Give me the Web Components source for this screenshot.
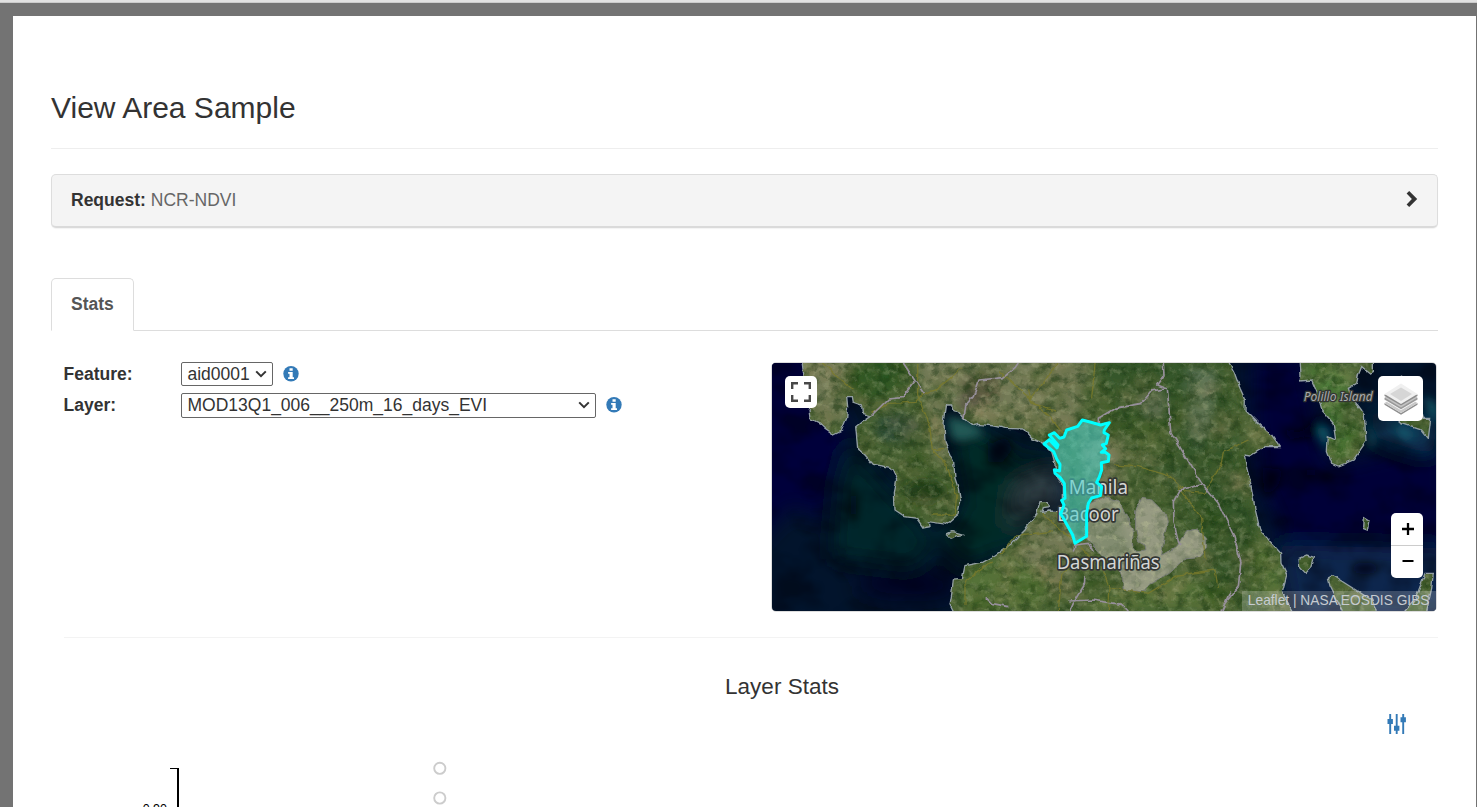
<!DOCTYPE html>
<html lang="en">
<head>
<meta charset="utf-8">
<title>View Area Sample</title>
<style>
html,body{margin:0;height:100%;overflow:hidden;background:#737373}
body{font-family:"Liberation Sans",Arial,sans-serif;font-size:17.5px;line-height:25px;color:#333}
</style>
</head>
<body>
<area-page>
  <page-title>View Area Sample</page-title>
  <request-panel label="Request:">NCR-NDVI</request-panel>
  <tab-bar>Stats</tab-bar>
  <stats-row>
    <field-row label="Feature:" w="92" top="0">aid0001</field-row>
    <field-row label="Layer:" w="415">MOD13Q1_006__250m_16_days_EVI</field-row>
    <area-map slot="map"></area-map>
  </stats-row>
  <layer-stats>Layer Stats</layer-stats>
</area-page>
<script>
function define(name, html, setup){
  customElements.define(name, class extends HTMLElement{
    constructor(){
      super();
      const t=document.createElement('template');
      t.innerHTML=html;
      this.attachShadow({mode:'open'}).append(t.content.cloneNode(true));
    }
    connectedCallback(){ if(setup) setup(this,this.shadowRoot); }
  });
}

define('area-page',`<style>
:host{display:flex;flex-direction:column;height:807px;box-sizing:border-box;background:#737373;padding:0 1px 0 0;overflow:hidden}
.top{height:2px;flex:none;background:#e1e1e1;border-bottom:1px solid #cbcbcb;margin-right:-1px}
main{flex:1;min-height:0;margin:13px 0 0 13px;background:#fff;padding:0 38px;overflow:hidden}
</style><div class="top"></div><main><slot></slot></main>`);

define('page-title',`<style>
:host{display:block;padding-top:74px;border-bottom:1px solid #eee}
h1{margin:0;font-size:30px;line-height:36px;font-weight:400;padding-bottom:22px}
</style><h1><slot></slot></h1>`);

define('request-panel',`<style>
:host{display:flex;align-items:center;justify-content:space-between;margin-top:25px;height:54px;box-sizing:border-box;padding:0 19px 1px;background:#f4f4f4;border:1px solid #ddd;border-bottom:2px solid #dadada;border-radius:5px;box-shadow:0 1px 1px rgba(0,0,0,.05)}
b{color:#333}span{color:#666}svg{display:block;margin-top:-2px}
</style><div><b></b> <span><slot></slot></span></div>
<svg width="12" height="18" viewBox="0 0 12 18"><path d="M.6 3.6 3.2 1l8 8-8 8-2.6-2.6L5.900 9z" fill="#333"/></svg>`,
(el,r)=>{r.querySelector('b').textContent=el.getAttribute('label')});

define('tab-bar',`<style>
:host{display:flex;margin-top:50px;height:53px;box-sizing:border-box;border-bottom:1px solid #ddd}
div{box-sizing:border-box;height:53px;width:83px;border:1px solid #ddd;border-bottom-color:#fff;border-radius:5px 5px 0 0;background:#fff;font-weight:700;color:#555;padding:13px 0 0 19px}
</style><div><slot></slot></div>`);

define('stats-row',`<style>
:host{display:flex;justify-content:space-between;margin:31px 0 0 13px;height:275px;border-bottom:1px solid #f3f3f3}
.map{padding-right:1px}
</style><div class="fields"><slot></slot></div><div class="map"><slot name="map"></slot></div>`);

define('field-row',`<style>
:host{display:flex;align-items:flex-start;height:31px}
b{width:117px;line-height:24px;flex:none;text-indent:-.5px}
.sel{box-sizing:border-box;height:25px;border:1px solid #666;border-radius:2px;display:flex;justify-content:space-between;align-items:center;padding:0 5px 1px 5.500px;white-space:nowrap;line-height:24px}
:host([top]) .sel{height:24px;padding-bottom:0}
.info{margin:4px 0 0 10px}
</style><b></b><div class="sel"><span><slot></slot></span><svg width="12" height="8" viewBox="0 0 12 8"><path d="M1.200 1.400 6 6.200l4.800-4.800" fill="none" stroke="#333" stroke-width="2"/></svg></div>
<svg class="info" width="17" height="17" viewBox="0 0 17 17"><circle cx="8" cy="7.800" r="7.700" fill="#337ab7"/><path d="M6.500 2.300h3.200v2.400H6.500zM5.100 6h4.600v5.200H11v1.900H5.100v-1.900h1.400V7.800H5.100z" fill="#fff"/></svg>`,
(el,r)=>{r.querySelector('b').textContent=el.getAttribute('label');
 r.querySelector('.sel').style.width=el.getAttribute('w')+'px';});

/* Map artwork: three drawing units per screen pixel */
define('area-map',`<style>
:host{display:block;position:relative;width:664px;height:248px;border:1px solid #ddd;border-radius:5px;overflow:hidden}
svg{display:block}
.btn{position:absolute;background:#fff;border-radius:5px;display:grid;place-items:center;color:#000}
.full{left:13px;top:13px;width:32px;height:32px}
.layers{left:606px;top:13px;width:45px;height:45px}
.zoom{left:619px;top:150px;width:32px;height:65px;grid-template-rows:32px 32px;row-gap:1px;background:linear-gradient(#fff 32px,#ccc 32px,#ccc 33px,#fff 33px)}
.zoom svg{margin-left:2px}
.attr{position:absolute;right:0;bottom:0;height:20px;line-height:19px;font-size:13.75px;padding:0 6.500px 0 6px;background:rgba(255,255,255,.2);color:#c6cbd0;white-space:nowrap}
</style>
<svg width="664" height="248" viewBox="21 24 1992 744">
<defs>
<filter id="landTex" x="0" y="0" width="100%" height="100%" color-interpolation-filters="sRGB">
<feTurbulence type="fractalNoise" baseFrequency=".010 .012" numOctaves="5" seed="8"/>
<feColorMatrix values=".9 0 0 0 -.06  .5 0 0 0 .17  .65 0 0 0 -.1  0 2 0 0 -.6"/></filter>
<filter id="grain" x="0" y="0" width="100%" height="100%" color-interpolation-filters="sRGB">
<feTurbulence type="fractalNoise" baseFrequency=".045 .05" numOctaves="3" seed="23"/>
<feColorMatrix values="0 0 0 0 .72  0 0 0 0 .74  0 0 0 0 .58  0 3 0 0 -1.500"/><feGaussianBlur stdDeviation="1.500"/></filter>
<filter id="darkGrain" x="0" y="0" width="100%" height="100%" color-interpolation-filters="sRGB">
<feTurbulence type="fractalNoise" baseFrequency=".03 .035" numOctaves="4" seed="4"/>
<feColorMatrix values="0 0 0 0 .08  0 0 0 0 .2  0 0 0 0 .06  0 3 0 0 -1.350"/><feGaussianBlur stdDeviation="2"/></filter>
<filter id="seaTex" x="0" y="0" width="100%" height="100%" color-interpolation-filters="sRGB">
<feTurbulence type="fractalNoise" baseFrequency=".008 .012" numOctaves="4" seed="15"/>
<feColorMatrix values="0 0 0 0 0  0 0 0 0 .01  0 0 0 0 .04  0 3 0 0 -1.250"/><feGaussianBlur stdDeviation="4"/></filter>
<filter id="rough" x="-5%" y="-5%" width="110%" height="110%"><feTurbulence type="fractalNoise" baseFrequency=".04" numOctaves="2" seed="3"/><feDisplacementMap in="SourceGraphic" scale="13" xChannelSelector="R" yChannelSelector="G"/></filter>
<filter id="b1" x="-40%" y="-40%" width="180%" height="180%"><feGaussianBlur stdDeviation="14"/></filter>
<filter id="b2" x="-60%" y="-60%" width="220%" height="220%"><feGaussianBlur stdDeviation="32"/></filter>
<path id="luzon" d="M110 10L118 70 128 105 142 125 132 165 135 190 165 205 180 220 205 237 230 225 245 190 248 155 245 125 262 125 265 142 290 150 292 175 318 182 290 200 272 215 278 280 300 300 325 328 378 337 395 375 388 410 390 465 420 485 455 490 475 518 492 515 490 500 545 508 578 480 587 440 580 400 570 370 566 320 540 260 537 205 545 150 560 150 564 167 580 170 597 192 625 212 640 208 690 213 720 220 775 222 800 250 835 265 860 290 870 325 872 360 895 390 895 430 890 470 850 468 830 472 835 458 853 455 850 440 825 440 815 475 780 525 735 570 690 600 650 622 600 632 592 670 565 672 562 705 555 750 575 790H1595L1565 740 1552 710 1565 660 1548 625 1547 595 1485 525 1470 460 1457 385 1443 330 1438 300 1455 303 1500 275 1545 275 1520 240 1475 200 1440 165 1441 135 1425 100 1407 50 1385 10z"/>
<path id="isles" d="M1605 10L1608 60 1605 78 1640 75 1655 110 1670 165 1705 205 1712 255 1690 245 1687 290 1700 325 1720 333 1765 315 1803 260 1798 180 1760 130 1750 100 1775 85 1780 60 1790 35 1815 55 1825 50V10zM1845 120L1890 125 1900 65 1910 60 1960 130 1975 190 1997 190 1990 250 1970 225 1910 205 1870 170zM1602 610L1625 600 1648 607 1640 635 1622 655 1604 635zM1795 485L1812 495 1807 525 1793 520zM1690 670L1705 662 1720 672 1820 735 1850 790H1745L1695 690zM1980 655H2005L2000 700 1980 790H1900L1950 735zM543 538L560 530 580 533 598 538 570 544 555 550z"/>
<path id="lakeEdge" d="M965 450L1020 425 1058 437 1085 485 1105 520 1102 570 1118 590 1143 584 1140 570 1120 560 1112 520 1112 465 1130 430 1160 435 1200 475 1207 500 1197 550 1190 600 1235 575 1262 530 1295 522 1325 550 1325 580 1300 608 1258 612 1210 655 1150 690 1135 710 1075 706 1073 670 1060 635 1030 615 1000 590 960 545z"/>
<clipPath id="clip"><use href="#luzon"/><use href="#isles"/></clipPath>
<clipPath id="lake"><use href="#lakeEdge"/></clipPath>
</defs>
<rect x="21" y="24" width="1992" height="744" fill="#02142c"/>
<g filter="url(#b2)"><path d="M-80-50H120L250 250 180 500 80 450-60 600z" fill="#03053a"/><path d="M250 260L400 430 520 560 450 640 200 610 220 380z" fill="#03252c"/><path d="M550 190L860 300 900 430 760 570 600 640 520 550 600 450z" fill="#062c28"/><path d="M600 220L850 300 800 400 690 270z" fill="#03191c"/><path d="M750 390L880 340 900 460 790 460 730 530z" fill="#35454c"/><path d="M1460 0H1620L1690 330 2050 250V600L1760 600 1560 560 1470 350z" fill="#030638"/><path d="M1540 570L2050 580V800H1580z" fill="#08284e"/><path d="M1800 180L1900 160 2020 200 2000 300 1840 250z" fill="#0b3755"/><ellipse cx="430" cy="690" rx="160" ry="40" fill="#020622"/></g>
<rect x="21" y="24" width="1992" height="744" filter="url(#seaTex)" opacity=".42"/>
<g filter="url(#b1)"><path d="M545 180L625 205 660 240 590 260 560 250z" fill="#225a56"/><path d="M1660 195L1690 235 1682 290 1668 240z" fill="#128088"/><path d="M1810 185L1828 260 1816 285zM1880 210L1950 240 1920 250zM1975 120L2013 150V210z" fill="#1d727f"/><g fill="#01030e" opacity=".85"><path d="M570 310L600 320 590 350zM670 270L720 245 745 280 710 325 670 320zM1490 335L1555 345 1540 390 1500 430zM1540 215L1600 230 1670 195 1660 240 1580 255z"/><ellipse cx="1635" cy="352" rx="18" ry="14"/><ellipse cx="1682" cy="368" rx="16" ry="12"/><ellipse cx="1800" cy="640" rx="40" ry="18"/><ellipse cx="265" cy="450" rx="12" ry="50"/></g></g>
<g filter="url(#rough)">
<g clip-path="url(#clip)">
<rect x="0" y="0" width="2030" height="800" fill="#486233"/>
<g filter="url(#b1)"><g fill="#737a57"><path d="M120 10H260L240 200 150 190zM450 10H980L930 210 720 220 560 160 520 260 470 100z"/><path d="M500 130L540 180 560 340 500 300zM770 510L900 470 960 600 900 700 760 600z"/><path d="M940 200L1070 260 1080 430 960 440z"/></g>
<g fill="#2b5420"><ellipse cx="330" cy="70" rx="85" ry="58"/><ellipse cx="480" cy="410" rx="60" ry="32" fill="#1d3a16"/><ellipse cx="400" cy="220" rx="70" ry="45" fill="#2d4d37"/><path d="M1000 10L1380 20 1430 370 1530 680 1450 770 1330 610 1220 390 1080 260z" fill="#35572a"/><path d="M1100 180L1210 230 1190 310 1100 270z" fill="#4b6533"/></g>
<g fill="#547238"><path d="M1480 530L1550 650 1550 760 1460 720zM600 650L740 600 860 680 820 768H590zM1000 720L1260 650 1380 760H960z"/><path d="M1620 30L1760 50 1710 250 1780 200 1770 300 1700 320 1640 100z" fill="#4e7d3b"/></g>
<path d="M600 70L690 50 700 130 580 170z" fill="#5b5446"/><path d="M1270 40L1350 50 1330 230 1300 280 1270 200z" fill="#5d7457"/><path d="M1130 90L1200 120 1190 210 1130 170z" fill="#566b4f"/><path d="M1450 205L1490 225 1510 270 1450 260z" fill="#737c4c"/></g>
<rect x="21" y="24" width="1992" height="744" filter="url(#landTex)" opacity=".5"/>
<rect x="21" y="24" width="1992" height="744" filter="url(#darkGrain)" opacity=".48"/>
<rect x="21" y="24" width="1992" height="744" filter="url(#grain)" opacity=".3"/>
</g>
<g clip-path="url(#lake)"><rect x="950" y="410" width="400" height="310" fill="#969a82"/><path d="M965 450L1050 435 1100 590 1050 620 950 545z" fill="#828c70" filter="url(#b1)"/><rect x="21" y="24" width="1992" height="744" filter="url(#darkGrain)" opacity=".22"/><rect x="21" y="24" width="1992" height="744" filter="url(#grain)" opacity=".5"/></g>
<g fill="none" stroke="#929ea2" stroke-width="4"><use href="#luzon"/><use href="#isles"/><use href="#lakeEdge" stroke="#777b76" stroke-width="3"/></g>
<g fill="none" stroke="#7a7a2c" stroke-width="4" opacity=".8"><path d="M172 24L265 105M320 173L370 145 450 142 470 120 520 100 590 40M458 24V120L495 220 502 285 545 330 575 420 570 480 500 480M502 285L535 280M705 50L760 100 810 145 860 190 900 240M795 130L860 50 880 24M790 100L800 145 870 165M1045 330L1120 335 1220 365 1260 410 1320 415 1370 320 1375 290 1450 255M1240 395L1310 490 1320 610M600 750L600 680 680 620M705 600L755 540 860 530M830 475L940 570 1010 640 1035 700 1030 768M880 768L890 660 930 610M1040 700L1150 715 1240 660 1350 645 1360 700M990 24L980 130"/></g>
<g fill="none" stroke="#968f9a" stroke-width="5" stroke-linejoin="round"><path d="M415 24L450 77 412 128 370 132 318 183M450 77L478 118M597 192L602 150 625 125 642 75 715 68 750 38 760 24M1195 24L1197 60 1175 90 1207 103 1217 230 1310 385 1360 445 1405 540 1428 620 1420 695 1380 745 1368 768M1310 385L1245 405 1225 440 1227 500 1240 560 1248 570M1000 210L1000 190 1050 160 1130 145 1160 108 1207 100M925 745L958 690 960 660M665 730L680 745 730 755M910 738L980 735 1070 748 1090 768M925 745L915 768M925 590L930 570 970 565 985 590M1395 710L1370 768"/></g>
</g>
<g font-family="'Noto Sans','Open Sans',sans-serif" fill="#d4d6d6" stroke="#333633" stroke-width="10" stroke-linejoin="round" paint-order="stroke">
<text x="911" y="418" font-size="59" textLength="178" lengthAdjust="spacingAndGlyphs">Manila</text>
<text x="877" y="497" font-size="59" textLength="184" lengthAdjust="spacingAndGlyphs">Bacoor</text>
<text x="875" y="642" font-size="59" textLength="309" lengthAdjust="spacingAndGlyphs">Dasmariñas</text>
<text x="1616" y="137" font-size="39" font-style="italic" fill="#a9aaac" stroke-width="8" textLength="207" lengthAdjust="spacingAndGlyphs">Polillo Island</text></g>
<path d="M837 267L853 254 876 279 879 270 853 240 868 233 884 250 897 246 905 225 938 214 952 195 975 201 1007 210 1021 206 1033 203 1018 225 1017 233 1030 240 1024 265 1012 270 1022 281 1009 292 1022 292 1032 300 1030 319 1009 323 1010 345 1003 366 995 382 1010 395 1006 422 980 429 970 445 965 475 965 544 930 565 923 540 895 490 887 477 897 450 890 436 900 430 898 386 885 367 870 355 868 344 884 348 885 328 875 312 866 290z" fill="#45d4cc" fill-opacity=".55" stroke="#0ff" stroke-width="9" stroke-linejoin="round"/>
</svg>
<div class="btn full"><svg width="20" height="20" viewBox="0 0 20 20"><path d="M1.200 7V1.200H7M13 1.200h5.800V7M18.800 13v5.800H13M7 18.800H1.200V13" fill="none" stroke="#484848" stroke-width="2.400"/></svg></div>
<div class="btn layers"><svg width="34" height="34" viewBox="0 0 34 34"><path d="M.5 21 17 31l16.500-10v1.800L17 32.800.5 22.800z" fill="#8f8f8f"/><path d="M.5 21 17 12l16.500 9L17 31z" fill="#c8c8c8"/><path d="M.5 17v1.500L17 28.300l16.500-9.800V17z" fill="#f7f7f7"/><path d="M.5 16 17 7l16.500 9v1.500L17 27.200.5 17.500z" fill="#999"/><path d="M.5 15.500 17 6l16.500 9.500L17 25.500z" fill="#c4c4c4"/><path d="M.5 12.500v1.500L17 23.500 33.500 14v-1.500z" fill="#8d8d8d"/><path d="M.5 12 17 1.500 33.500 12 17 22z" fill="#f0f0f0"/><path d="M6 12 17 5.500 28 12 17 19z" fill="#d6d6d6"/></svg></div>
<div class="btn zoom"><svg width="14" height="14" viewBox="0 0 14 14"><path d="M7 1v12M1 7h12" stroke="#000" stroke-width="2.300"/></svg><svg width="14" height="14" viewBox="0 0 14 14"><path d="M1.500 6h11" stroke="#000" stroke-width="2"/></svg></div>
<div class="attr">Leaflet | NASA EOSDIS GIBS</div>`);

define('layer-stats',`<style>
:host{display:block}
h2{margin:34px 0 0;padding-left:75px;font-size:22.500px;line-height:30px;font-weight:400;text-align:center}
.tools{display:flex;justify-content:flex-end;padding:11px 31px 0 0}
svg{display:block}
.chart{margin-top:26px}
</style><h2><slot></slot></h2>
<div class="tools"><svg width="20" height="22" viewBox="0 0 20 22"><path d="M3.200 1v20M9.700 1v20M16.200 1v20" stroke="#337ab7" stroke-width="1.900"/><path d="M.5 6h5.400v5H.5zM7 12.700h5.400v5H7zM13.500 4.300h5.400v5h-5.400z" fill="#337ab7"/></svg></div>
<svg class="chart" width="1387" height="47" viewBox="51 761 1387 47">
<path d="M170 768.500h8.500" stroke="#000" stroke-width="1"/><path d="M178 768v40" stroke="#000" stroke-width="2"/>
<text x="167" y="813" text-anchor="end" font-size="12.500" fill="#000">0.90</text>
<g fill="#fff" stroke="#ccc" stroke-width="1.900"><circle cx="439.800" cy="768.300" r="5.600"/><circle cx="439.800" cy="798" r="5.600"/></g></svg>`);
</script>
</body>
</html>
